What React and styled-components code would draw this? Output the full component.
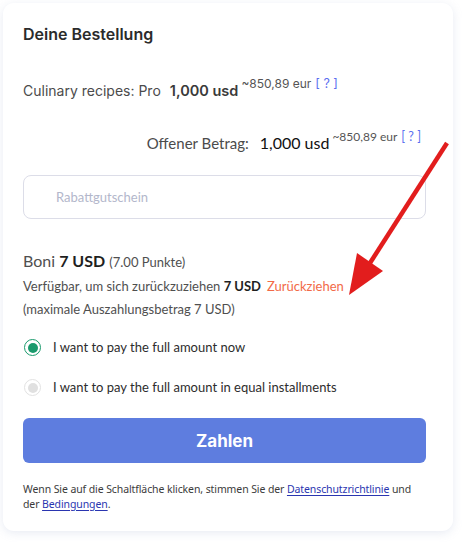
import React from "react";
import styled, { createGlobalStyle } from "styled-components";

const GlobalStyle = createGlobalStyle`
  body {
    margin: 0;
    background: #ffffff;
    font-family: Inter, "Liberation Sans", sans-serif;
  }
`;

const Page = styled.div`
  position: relative;
  width: 472px;
  height: 547px;
  padding: 3px 0 0 3px;
  box-sizing: border-box;
`;

const Card = styled.div`
  width: 450px;
  height: 528px;
  box-sizing: border-box;
  background: #fff;
  border-radius: 11px;
  box-shadow: 0 2px 10px rgba(150, 165, 200, 0.22);
  padding: 21px 27px 0 20px;
  display: flex;
  flex-direction: column;
`;

const Title = styled.h2`
  margin: 0;
  font-size: 16px;
  font-weight: 600;
  color: #2b2b2b;
  line-height: 20px;
`;

const PriceRow = styled.div`
  text-align: ${(p) => (p.$right ? "right" : "left")};
  line-height: 20px;
  white-space: nowrap;
  margin-top: ${(p) => p.$top}px;
  padding-right: ${(p) => (p.$right ? 5 : 0)}px;
  font-family: ${(p) => (p.$lato ? "Lato, sans-serif" : "Inter, sans-serif")};
`;

const Label = styled.span`
  font-size: ${(p) => (p.$lato ? 15 : 14)}px;
  color: #4b4b4b;
  margin-right: ${(p) => (p.$lato ? 11 : 9)}px;
`;

const Amount = styled.span`
  font-size: ${(p) => (p.$lato ? 16 : 14.5)}px;
  font-weight: ${(p) => (p.$lato ? 400 : 600)};
  color: ${(p) => (p.$lato ? "#111" : "#3a3a3a")};
  margin-right: 3px;
`;

const Approx = styled.sup`
  font-size: 12px;
  color: #555;
  line-height: 0;
  vertical-align: 8px;
`;

const Help = styled.sup`
  color: #5b6ef0;
  margin-left: 4px;
  font-size: 12.5px;
  vertical-align: 8px;
  line-height: 0;
`;

const Input = styled.input`
  margin-top: 22px;
  width: 403px;
  height: 44px;
  box-sizing: border-box;
  border: 1px solid #dcdde8;
  border-radius: 8px;
  padding: 0 0 0 32px;
  font-family: Lato, sans-serif;
  font-size: 13px;
  outline: none;
  &::placeholder {
    color: #b3b7cb;
  }
`;

const Bonus = styled.div`
  margin-top: 31px;
  font-family: Lato, sans-serif;
  color: #4f4f4f;
`;

const BonusHead = styled.div`
  font-size: 16px;
  line-height: 22px;
  b {
    color: #1f1f1f;
    font-weight: 700;
  }
  small {
    font-size: 13px;
  }
`;

const Line = styled.div`
  font-size: 13px;
  line-height: 23px;
  margin-top: ${(p) => p.$top || 0}px;
  b {
    color: #1f1f1f;
    font-weight: 700;
  }
`;

const Withdraw = styled.span`
  color: #f26a48;
  margin-left: 6px;
`;

const Options = styled.div`
  display: flex;
  flex-direction: column;
  gap: 21px;
  margin-top: 17px;
  font-family: Lato, sans-serif;
`;

const Option = styled.label`
  display: flex;
  align-items: center;
  gap: 12px;
  font-size: 13px;
  color: #2d2d2d;
  line-height: 19px;
  padding-left: 1px;
`;

const Radio = styled.span`
  width: 17px;
  height: 17px;
  box-sizing: border-box;
  border-radius: 50%;
  border: 1.5px solid ${(p) => (p.$on ? "#1a9a6c" : "#e2e2e2")};
  display: flex;
  align-items: center;
  justify-content: center;
  &::after {
    content: "";
    width: 10px;
    height: 10px;
    border-radius: 50%;
    background: ${(p) => (p.$on ? "#1a9a6c" : "#e0e0e0")};
  }
`;

const PayButton = styled.button`
  margin-top: 21px;
  width: 403px;
  height: 45px;
  border: none;
  border-radius: 6px;
  background: #5e7ddf;
  color: #fff;
  font-family: Inter, sans-serif;
  font-size: 17px;
  font-weight: 700;
`;

const Terms = styled.p`
  margin: 19px 0 0;
  font-family: "Noto Sans", sans-serif;
  font-size: 10.5px;
  line-height: 14.5px;
  color: #3b3b3b;
  letter-spacing: -0.1px;
  a {
    color: #2a35b0;
    text-decoration: underline;
    text-underline-offset: 2px;
  }
`;

const Arrow = styled.svg`
  position: absolute;
  left: 340px;
  top: 135px;
`;

export default function App() {
  return (
    <>
      <GlobalStyle />
      <Page>
        <Card>
          <Title>Deine Bestellung</Title>
          <PriceRow $top={36}>
            <Label>Culinary recipes: Pro</Label>
            <Amount>1,000 usd</Amount>
            <Approx>~850,89 eur</Approx>
            <Help>[ ? ]</Help>
          </PriceRow>
          <PriceRow $top={32} $right $lato>
            <Label $lato>Offener Betrag:</Label>
            <Amount $lato>1,000 usd</Amount>
            <Approx>~850,89 eur</Approx>
            <Help>[ ? ]</Help>
          </PriceRow>
          <Input placeholder="Rabattgutschein" />
          <Bonus>
            <BonusHead>
              Boni <b>7 USD</b> <small>(7.00 Punkte)</small>
            </BonusHead>
            <Line $top={2}>
              Verfügbar, um sich zurückzuziehen <b>7 USD</b>
              <Withdraw>Zurückziehen</Withdraw>
            </Line>
            <Line>(maximale Auszahlungsbetrag 7 USD)</Line>
          </Bonus>
          <Options>
            <Option>
              <Radio $on />I want to pay the full amount now
            </Option>
            <Option>
              <Radio />I want to pay the full amount in equal installments
            </Option>
          </Options>
          <PayButton>Zahlen</PayButton>
          <Terms>
            Wenn Sie auf die Schaltfläche klicken, stimmen Sie der{" "}
            <a>Datenschutzrichtlinie</a> und der <a>Bedingungen</a>.
          </Terms>
        </Card>
        <Arrow width="120" height="165" viewBox="0 0 120 165">
          <line x1="107" y1="8" x2="30" y2="128" stroke="#e21d1d" strokeWidth="4.5" strokeLinecap="butt" />
          <polygon points="9,160 17,118 43,136" fill="#e21d1d" />
        </Arrow>
      </Page>
    </>
  );
}
